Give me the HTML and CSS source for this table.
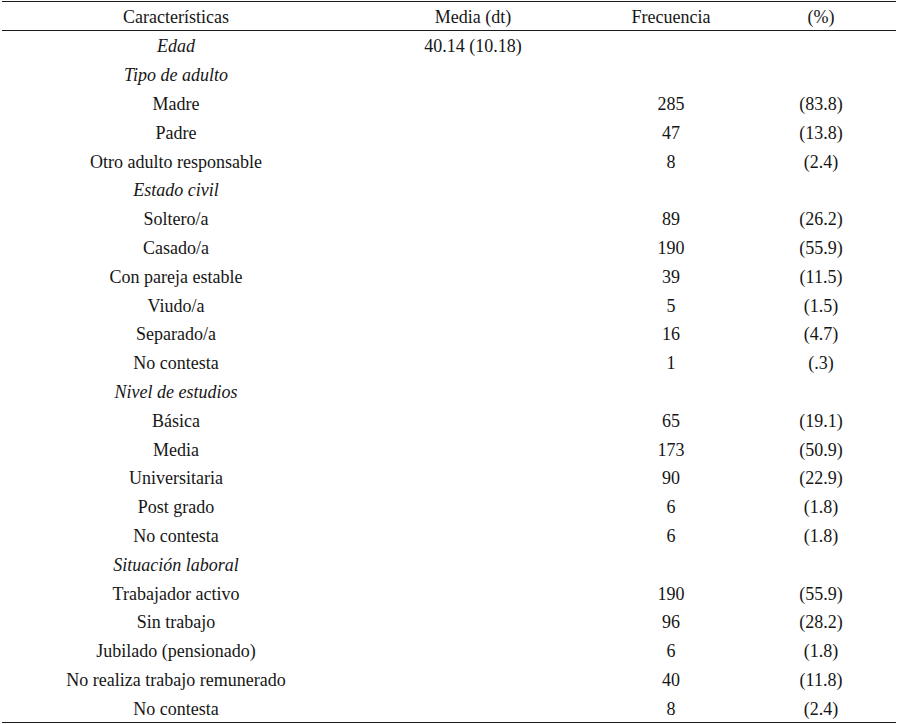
FILE: index.html
```html
<!DOCTYPE html>
<html lang="es">
<head>
<meta charset="utf-8">
<title>Características</title>
<link rel="stylesheet" href="styles.css">
</head>
<body>
<div class="table">
  <div class="row head">
    <div class="c">Características</div><div class="c">Media (dt)</div><div class="c">Frecuencia</div><div class="c">(%)</div>
  </div>
  <div class="body">
    <div class="row"><div class="c it">Edad</div><div class="c">40.14 (10.18)</div><div class="c"></div><div class="c"></div></div>
    <div class="row"><div class="c it">Tipo de adulto</div><div class="c"></div><div class="c"></div><div class="c"></div></div>
    <div class="row"><div class="c">Madre</div><div class="c"></div><div class="c">285</div><div class="c">(83.8)</div></div>
    <div class="row"><div class="c">Padre</div><div class="c"></div><div class="c">47</div><div class="c">(13.8)</div></div>
    <div class="row"><div class="c">Otro adulto responsable</div><div class="c"></div><div class="c">8</div><div class="c">(2.4)</div></div>
    <div class="row"><div class="c it">Estado civil</div><div class="c"></div><div class="c"></div><div class="c"></div></div>
    <div class="row"><div class="c">Soltero/a</div><div class="c"></div><div class="c">89</div><div class="c">(26.2)</div></div>
    <div class="row"><div class="c">Casado/a</div><div class="c"></div><div class="c">190</div><div class="c">(55.9)</div></div>
    <div class="row"><div class="c">Con pareja estable</div><div class="c"></div><div class="c">39</div><div class="c">(11.5)</div></div>
    <div class="row"><div class="c">Viudo/a</div><div class="c"></div><div class="c">5</div><div class="c">(1.5)</div></div>
    <div class="row"><div class="c">Separado/a</div><div class="c"></div><div class="c">16</div><div class="c">(4.7)</div></div>
    <div class="row"><div class="c">No contesta</div><div class="c"></div><div class="c">1</div><div class="c">(.3)</div></div>
    <div class="row"><div class="c it">Nivel de estudios</div><div class="c"></div><div class="c"></div><div class="c"></div></div>
    <div class="row"><div class="c">Básica</div><div class="c"></div><div class="c">65</div><div class="c">(19.1)</div></div>
    <div class="row"><div class="c">Media</div><div class="c"></div><div class="c">173</div><div class="c">(50.9)</div></div>
    <div class="row"><div class="c">Universitaria</div><div class="c"></div><div class="c">90</div><div class="c">(22.9)</div></div>
    <div class="row"><div class="c">Post grado</div><div class="c"></div><div class="c">6</div><div class="c">(1.8)</div></div>
    <div class="row"><div class="c">No contesta</div><div class="c"></div><div class="c">6</div><div class="c">(1.8)</div></div>
    <div class="row"><div class="c it">Situación laboral</div><div class="c"></div><div class="c"></div><div class="c"></div></div>
    <div class="row"><div class="c">Trabajador activo</div><div class="c"></div><div class="c">190</div><div class="c">(55.9)</div></div>
    <div class="row"><div class="c">Sin trabajo</div><div class="c"></div><div class="c">96</div><div class="c">(28.2)</div></div>
    <div class="row"><div class="c">Jubilado (pensionado)</div><div class="c"></div><div class="c">6</div><div class="c">(1.8)</div></div>
    <div class="row"><div class="c">No realiza trabajo remunerado</div><div class="c"></div><div class="c">40</div><div class="c">(11.8)</div></div>
    <div class="row"><div class="c">No contesta</div><div class="c"></div><div class="c">8</div><div class="c">(2.4)</div></div>
  </div>
</div>
</body>
</html>
```
FILE: styles.css
```css
html, body {
  margin: 0;
  padding: 0;
  background: #ffffff;
}
body {
  padding-top: 1px;
  padding-left: 2px;
  font-family: "Liberation Serif", "Times New Roman", serif;
  font-size: 18px;
  color: #161616;
}
.table {
  width: 894px;
  border-top: 1px solid #1a1a1a;
  border-bottom: 1px solid #1a1a1a;
}
.row {
  display: grid;
  grid-template-columns: 348px 246px 150px 150px;
  height: 28.8px;
  align-items: center;
}
.head {
  height: 28px;
  border-bottom: 1px solid #1a1a1a;
}
.c {
  text-align: center;
  white-space: nowrap;
  line-height: 20px;
  padding-top: 2px;
}
.it {
  font-style: italic;
}
```
